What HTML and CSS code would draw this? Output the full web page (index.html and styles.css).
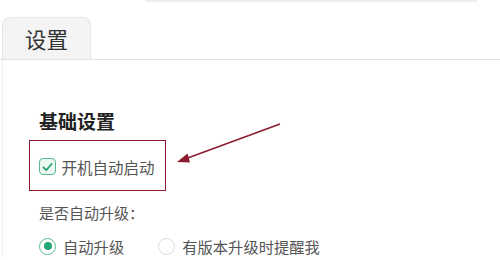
FILE: index.html
```html
<!DOCTYPE html>
<html lang="zh">
<head>
<meta charset="utf-8">
<link rel="stylesheet" href="styles.css">
</head>
<body>
<div class="topbar"></div>
<div class="tabs">
  <div class="tab">设置</div>
</div>
<div class="content">
  <div class="title">基础设置</div>
  <div class="mark">
    <label class="check-row">
      <span class="checkbox">
        <svg viewBox="0 0 16 16" width="16" height="16"><path d="M3.6 8.3 L6.7 11.3 L12.4 4.8" fill="none" stroke="#27a070" stroke-width="1.9" stroke-linecap="round" stroke-linejoin="round"/></svg>
      </span>
      <span class="check-text">开机自动启动</span>
    </label>
  </div>
  <div class="label">是否自动升级：</div>
  <div class="radio-row">
    <span class="radio on"></span><span class="radio-text first">自动升级</span>
    <span class="radio"></span><span class="radio-text">有版本升级时提醒我</span>
  </div>
  <svg class="arrow" width="120" height="50" viewBox="0 0 120 50">
    <line x1="107" y1="3" x2="12" y2="38" stroke="#8b1c30" stroke-width="1.6"/>
    <path d="M4 41 L14.5 32.5 L17 41.5 Z" fill="#8b1c30"/>
  </svg>
</div>
</body>
</html>
```
FILE: styles.css
```css
html, body {
  margin: 0;
  padding: 0;
  background: #fff;
}
body {
  width: 500px;
  height: 260px;
  overflow: hidden;
  position: relative;
  font-family: "Noto Sans CJK SC", "Noto Sans", sans-serif;
  color: #555;
}
.topbar {
  margin-left: 145px;
  width: 332px;
  height: 2px;
  background: #eeeeee;
}
.tabs {
  margin-top: 15px;
  padding-left: 2px;
  display: flex;
  border-bottom: 1px solid #e3e3e3;
}
.tab {
  width: 89px;
  height: 42px;
  box-sizing: border-box;
  background: #f4f4f4;
  border: 1px solid #e6e6e6;
  border-bottom: none;
  border-radius: 8px 8px 0 0;
  font-size: 21.5px;
  line-height: 41px;
  text-align: center;
  color: #333;
}
.content {
  margin-left: 2px;
  border-left: 1px solid #eeeeee;
  padding: 49px 0 0 36px;
  position: relative;
  height: 149px;
}
.title {
  font-size: 19px;
  line-height: 24px;
  font-weight: bold;
  color: #222;
}
.mark {
  margin-top: 7px;
  margin-left: -10px;
  width: 137px;
  height: 51px;
  box-sizing: border-box;
  border: 1.5px solid #8b1c30;
  padding-left: 8.5px;
  display: flex;
  align-items: center;
}
.check-row {
  display: flex;
  align-items: center;
  gap: 6px;
  margin-top: 2px;
}
.checkbox {
  width: 17px;
  height: 17px;
  box-sizing: border-box;
  border: 1.2px solid #55bb95;
  border-radius: 4px;
  background: #eef8f3;
  display: flex;
  align-items: center;
  justify-content: center;
}
.checkbox svg {
  display: block;
}
.check-text {
  font-size: 15.5px;
  line-height: 20px;
  color: #555;
}
.label {
  margin-top: 12px;
  font-size: 15px;
  line-height: 20px;
  color: #555;
}
.radio-row {
  margin-top: 13px;
  display: flex;
  align-items: center;
}
.radio {
  width: 17px;
  height: 17px;
  box-sizing: border-box;
  border: 1px solid #dcdcdc;
  border-radius: 50%;
  background: #fff;
  position: relative;
}
.radio.on {
  border-color: #55bb95;
}
.radio.on::after {
  content: "";
  position: absolute;
  left: 3.5px;
  top: 3.5px;
  width: 8px;
  height: 8px;
  border-radius: 50%;
  background: #27a574;
}
.radio-text {
  margin-left: 7px;
  font-size: 15.3px;
  line-height: 20px;
  color: #555;
}
.radio-text.first {
  margin-right: 34px;
}
.arrow {
  position: absolute;
  left: 170px;
  top: 61px;
}
```
